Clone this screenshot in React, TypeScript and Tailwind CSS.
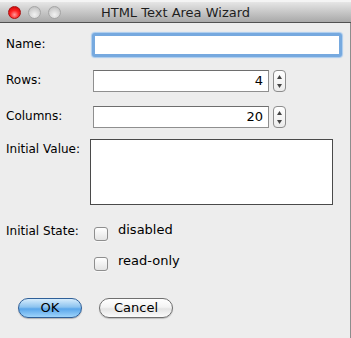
import React from "react";

const font = { fontFamily: '"DejaVu Sans", "Liberation Sans", sans-serif' };

function Light({ red }: { red?: boolean }) {
  return (
    <div
      className={
        red
          ? "w-[13px] h-[13px] rounded-full border border-[#a11] bg-[radial-gradient(circle_at_50%_70%,#ff9b9b_0%,#f22_45%,#b00_100%)]"
          : "w-[13px] h-[13px] rounded-full border border-[#a5a5a5] bg-[radial-gradient(circle_at_50%_70%,#f2f2f2_0%,#d6d6d6_50%,#b4b4b4_100%)]"
      }
    />
  );
}

function Spinner() {
  return (
    <div className="ml-[4px] w-[13px] h-[22px] rounded-[4px] border border-[#8c8c8c] bg-gradient-to-b from-white to-[#ececec] flex flex-col items-center justify-center gap-[5px]">
      <svg width="5" height="4" viewBox="0 0 5 4"><path d="M2.5 0L5 4H0z" fill="#444" /></svg>
      <svg width="5" height="4" viewBox="0 0 5 4"><path d="M0 0H5L2.5 4z" fill="#444" /></svg>
    </div>
  );
}

function Check() {
  return (
    <div className="w-[14px] h-[14px] rounded-[3px] border border-[#8e8e8e] bg-gradient-to-b from-white to-[#e4e4e4] shadow-[0_1px_0_rgba(255,255,255,0.6)]" />
  );
}

export default function App() {
  return (
    <div className="w-[351px] h-[338px] bg-[#ededed] flex flex-col text-[12px] text-black overflow-hidden" style={font}>
      <div className="h-[2px] bg-[#f4f4f4]" />
      <div className="h-[21px] bg-gradient-to-b from-[#e6e6e6] to-[#a9a9a9] border-b border-[#515151] flex items-center relative">
        <div className="flex items-center gap-[7px] pl-[8px] pt-[1px]">
          <Light red />
          <Light />
          <Light />
        </div>
        <div className="absolute inset-0 flex items-center justify-center text-[13px] text-[#1e1e1e] pt-[1px]">
          HTML Text Area Wizard
        </div>
      </div>
      <div className="flex-1 border-r border-[#8d8d8d] flex flex-col">
        <div className="mt-[10px] flex items-center h-[24px]">
          <div className="w-[92px] pl-[6px] pb-[2px]">Name:</div>
          <div className="w-[250px] h-[24px] rounded-[3px] border-[3px] border-[#76a9df] shadow-[0_0_1px_1px_#a9cbee] bg-white" />
        </div>
        <div className="mt-[13px] flex items-center h-[22px]">
          <div className="w-[93px] pl-[6px] pb-[2px]">Rows:</div>
          <div className="w-[176px] h-[22px] border border-[#8f8f8f] border-t-[#6e6e6e] bg-white flex items-center justify-end pr-[5px] text-[13px]">4</div>
          <Spinner />
        </div>
        <div className="mt-[14px] flex items-center h-[22px]">
          <div className="w-[93px] pl-[6px] pb-[2px]">Columns:</div>
          <div className="w-[176px] h-[22px] border border-[#8f8f8f] border-t-[#6e6e6e] bg-white flex items-center justify-end pr-[5px] text-[13px]">20</div>
          <Spinner />
        </div>
        <div className="mt-[11px] flex h-[66px]">
          <div className="w-[90px] pl-[6px] pt-[1px]">Initial Value:</div>
          <div className="w-[243px] h-[66px] border border-[#4a4a4a] bg-white" />
        </div>
        <div className="mt-[20px] flex items-start h-[17px]">
          <div className="w-[94px] pl-[6px] mt-[-3px]">Initial State:</div>
          <div className="mt-[2px]"><Check /></div>
          <div className="ml-[10px] text-[13px] leading-[15px] mt-[-3px]">disabled</div>
        </div>
        <div className="mt-[13px] flex items-start h-[17px]">
          <div className="w-[94px]" />
          <div className="mt-[2px]"><Check /></div>
          <div className="ml-[10px] text-[13px] leading-[15px] mt-[-2px]">read-only</div>
        </div>
        <div className="mt-[26px] flex items-center pl-[18px] gap-[17px] text-[13px]">
          <div className="w-[64px] h-[20px] rounded-full border border-[#2f5f98] bg-[linear-gradient(to_bottom,#d6ecfc_0%,#8cc3ef_45%,#5aa6ea_55%,#9ed4fb_100%)] flex items-center justify-center shadow-[0_1px_1px_rgba(0,0,0,0.25)]">
            OK
          </div>
          <div className="w-[74px] h-[20px] rounded-full border border-[#6f6f6f] bg-[linear-gradient(to_bottom,#ffffff_0%,#f4f4f4_45%,#e4e4e4_55%,#fbfbfb_100%)] flex items-center justify-center shadow-[0_1px_1px_rgba(0,0,0,0.2)]">
            Cancel
          </div>
        </div>
      </div>
    </div>
  );
}
